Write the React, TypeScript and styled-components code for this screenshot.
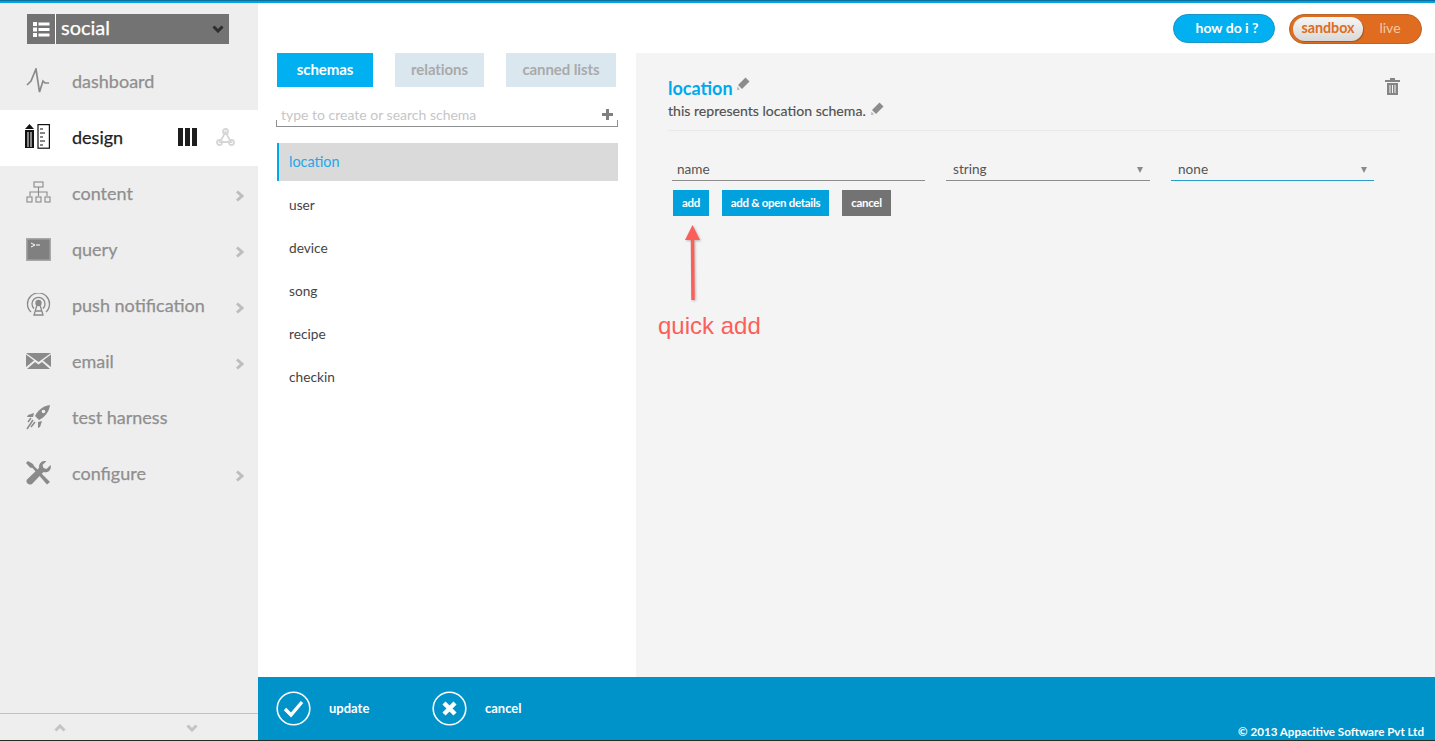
import React from 'react';
import styled, { createGlobalStyle } from 'styled-components';

const GlobalStyle = createGlobalStyle`
  html, body { margin: 0; padding: 0; height: 100%; background: #fff; }
  body { font-family: Lato, "Open Sans", sans-serif; }
  * { box-sizing: border-box; }
`;

const Page = styled.div`
  position: relative;
  width: 1435px;
  height: 741px;
  overflow: hidden;
  display: flex;
  flex-direction: column;
  border-bottom: 1px solid #2b2b20;
`;
const TopLine = styled.div`
  height: 3px;
  flex-shrink: 0;
  background: #00a2e0;
  border-top: 1px solid #0a6f9c;
`;
const Body = styled.div`
  flex: 1;
  display: flex;
  min-height: 0;
`;

/* sidebar */
const Sidebar = styled.aside`
  width: 258px;
  flex-shrink: 0;
  background: #eeeeee;
  display: flex;
  flex-direction: column;
`;
const AppSelect = styled.div`
  display: flex;
  gap: 1px;
  height: 30px;
  margin: 11px 29px 10px 27px;
  background: #fff;
`;
const AppIcon = styled.div`
  width: 28px;
  background: #737373;
  display: flex;
  align-items: center;
  justify-content: center;
`;
const AppName = styled.div`
  flex: 1;
  background: #737373;
  color: #fff;
  font-size: 20px;
  line-height: 28px;
  padding: 0 5px 0 5px;
  display: flex;
  justify-content: space-between;
  align-items: center;
  -webkit-text-stroke: 0.25px #fff;
`;
const AppNameText = styled.span`
  margin-top: -4px;
`;
const Nav = styled.nav`
  flex: 1;
`;
const NavRow = styled.div<{ $active?: boolean }>`
  height: 56px;
  display: flex;
  align-items: center;
  padding: 0 0 2px 25px;
  background: ${(p) => (p.$active ? '#fff' : 'transparent')};
  color: ${(p) => (p.$active ? '#1e1e1e' : '#8f8f8f')};
  font-size: 18px;
`;
const NavIcon = styled.span`
  width: 26px;
  height: 26px;
  margin-right: 21px;
  display: flex;
  align-items: center;
  justify-content: center;
  flex-shrink: 0;
`;
const NavLabel = styled.span`
  flex: 1;
  -webkit-text-stroke: 0.25px currentColor;
`;
const NavChevron = styled.span`
  width: 8px;
  height: 12px;
  margin-right: 14px;
  margin-top: 5px;
  display: flex;
`;
const DesignTools = styled.span`
  display: flex;
  align-items: center;
  gap: 19px;
  margin-right: 23px;
`;
const SideFooter = styled.div`
  height: 27px;
  border-top: 1px solid #c2c2c2;
  display: flex;
  align-items: center;
  justify-content: space-between;
  padding: 1px 60px 0 54px;
`;

/* main */
const Main = styled.main`
  flex: 1;
  min-width: 0;
  display: flex;
  flex-direction: column;
`;
const Header = styled.header`
  height: 50px;
  flex-shrink: 0;
  display: flex;
  justify-content: flex-end;
  align-items: flex-start;
  padding: 11px 13px 0 0;
  gap: 14px;
`;
const HelpButton = styled.div`
  width: 102px;
  height: 29px;
  border-radius: 15px;
  background: #00b0f0;
  border: 1px solid #1c94c4;
  color: #fff;
  font-size: 14px;
  font-weight: 700;
  display: flex;
  align-items: center;
  justify-content: center;
  padding: 0 0 2px 6px;
`;
const EnvSwitch = styled.div`
  width: 133px;
  height: 30px;
  border-radius: 15px;
  background: #e06c20;
  border: 1px solid #b8662a;
  display: flex;
  align-items: center;
  padding-left: 3px;
`;
const EnvActive = styled.div`
  width: 70px;
  height: 24px;
  border-radius: 12px;
  background: linear-gradient(#f6f6f6, #d8d8d8);
  box-shadow: 1px 1px 1px #9a5a2a;
  color: #e06c20;
  font-size: 14.3px;
  font-weight: 700;
  text-align: center;
  line-height: 21px;
`;
const EnvOther = styled.div`
  flex: 1;
  text-align: center;
  color: #f3c9a8;
  font-size: 14px;
  padding-right: 4px;
  margin-top: -3px;
`;
const Content = styled.div`
  flex: 1;
  display: flex;
  min-height: 0;
`;

/* schema list column */
const ListColumn = styled.section`
  width: 378px;
  flex-shrink: 0;
  padding: 0 18px 0 19px;
`;
const Tabs = styled.div`
  display: flex;
  gap: 22px;
  width: 339px;
`;
const Tab = styled.div<{ $active?: boolean; $w: number }>`
  width: ${(p) => p.$w}px;
  height: 34px;
  background: ${(p) => (p.$active ? '#00b0f0' : '#dae7ef')};
  color: ${(p) => (p.$active ? '#fff' : '#aaaaaa')};
  font-size: 15px;
  font-weight: 700;
  letter-spacing: -0.1px;
  padding-bottom: 2px;
  display: flex;
  align-items: center;
  justify-content: center;
`;
const SearchBox = styled.div`
  margin: 19px 0 16px -1px;
  width: 342px;
  height: 21px;
  border: 1px solid #8f8f8f;
  border-width: 0 1px 1px;
  border-image: linear-gradient(to bottom, transparent 70%, #8f8f8f 70%) 1;
  display: flex;
  align-items: center;
  justify-content: space-between;
  padding: 0 4px 4px 4px;
  color: #c6c6c6;
  font-size: 14px;
`;
const SchemaList = styled.div`
  display: flex;
  flex-direction: column;
  gap: 5px;
`;
const SchemaRow = styled.div<{ $active?: boolean }>`
  height: 38px;
  display: flex;
  align-items: center;
  padding: 0 0 2px ${(p) => (p.$active ? '10px' : '12px')};
  font-size: ${(p) => (p.$active ? '14.4px' : '13.7px')};
  color: ${(p) => (p.$active ? '#22a7ea' : '#444')};
  background: ${(p) => (p.$active ? '#dadada' : 'transparent')};
  border-left: ${(p) => (p.$active ? '2px solid #00a9ec' : 'none')};
`;

/* detail panel */
const Detail = styled.section`
  flex: 1;
  background: #f4f4f4;
  padding: 24px 35px 0 32px;
`;
const DetailHead = styled.div`
  display: flex;
  justify-content: space-between;
  align-items: flex-start;
  height: 54px;
  border-bottom: 1px solid #e9e9e9;
`;
const Title = styled.h1`
  margin: 0;
  color: #00a9ec;
  font-size: 18px;
  font-weight: 700;
  line-height: 22px;
  display: flex;
  align-items: flex-start;
  gap: 4px;
`;
const Description = styled.p`
  margin: 3px 0 0;
  color: #505050;
  font-size: 14.1px;
  line-height: 18px;
  display: flex;
  align-items: flex-start;
  gap: 5px;
  -webkit-text-stroke: 0.15px currentColor;
`;
const TrashIcon = styled.span`
  padding-top: 1px;
  display: flex;
`;
const FieldRow = styled.div`
  display: flex;
  gap: 21px;
  margin: 29px 0 0 4px;
`;
const Field = styled.div<{ $w: number; $blue?: boolean; $inset?: boolean }>`
  width: ${(p) => p.$w}px;
  height: 21px;
  border-bottom: 1px solid ${(p) => (p.$blue ? '#2a9ccc' : '#8c8c8c')};
  color: #555;
  font-size: 13.6px;
  padding: 0 7px 2px ${(p) => (p.$inset ? '7px' : '5px')};
  display: flex;
  justify-content: space-between;
  align-items: center;
`;
const Caret = styled.span`
  width: 0;
  height: 0;
  margin-top: 1px;
  border-left: 3.5px solid transparent;
  border-right: 3.5px solid transparent;
  border-top: 6px solid #8a8a8a;
`;
const ButtonRow = styled.div`
  display: flex;
  gap: 13px;
  margin: 9px 0 0 5px;
`;
const SmallButton = styled.div<{ $grey?: boolean; $w: number }>`
  width: ${(p) => p.$w}px;
  height: 26px;
  background: ${(p) => (p.$grey ? '#737373' : '#00a1dc')};
  color: #fff;
  font-size: 11.5px;
  font-weight: 700;
  letter-spacing: -0.3px;
  padding-bottom: 1px;
  display: flex;
  align-items: center;
  justify-content: center;
`;

/* annotation over the panel */
const Annotation = styled.div`
  position: absolute;
  left: 658px;
  top: 225px;
`;
const ArrowDrawing = styled.svg`
  position: absolute;
  left: 20px;
  top: 0;
  filter: drop-shadow(1px 1px 1px rgba(0, 0, 0, 0.25));
`;
const AnnotationText = styled.div`
  position: absolute;
  top: 87px;
  left: 0;
  white-space: nowrap;
  color: #fb5f5a;
  font-family: "Liberation Sans", Arial, sans-serif;
  font-size: 24px;
  line-height: 28px;
`;

/* footer */
const Footer = styled.footer`
  position: relative;
  height: 63px;
  flex-shrink: 0;
  background: #0093c9;
  display: flex;
  align-items: center;
  padding: 0 0 0 18px;
  color: #fff;
  font-size: 13px;
  font-weight: 700;
`;
const FooterAction = styled.div<{ $w: number }>`
  width: ${(p) => p.$w}px;
  display: flex;
  align-items: center;
  gap: 18px;
  margin-bottom: 1px;
`;
const Copyright = styled.div`
  position: absolute;
  right: 11px;
  bottom: 1px;
  font-size: 11.6px;
  line-height: 15px;
`;

const grey = '#8a8a8a';

const Chevron = () => (
  <NavChevron>
    <svg width="8" height="12" viewBox="0 0 8 12">
      <path d="M1 1.5 L6 6 L1 10.5" fill="none" stroke="#bdbdbd" strokeWidth="3" />
    </svg>
  </NavChevron>
);

const Pencil = () => (
  <svg width="13" height="13" viewBox="0 0 13 13">
    <path d="M8.5 0.5 L12.5 4.5 L5 12 L1 8 Z" fill="#8c8c8c" />
    <path d="M0.5 9.5 L3 12.5 L0 13 Z" fill="#b5b5b5" />
  </svg>
);

const DashboardIcon = () => (
  <svg width="24" height="26" viewBox="0 0 24 26">
    <path d="M1 17 L5 13 L10 1 L13.5 24 L17 13 L19 15 L23 15" fill="none" stroke={grey} strokeWidth="1.7" />
  </svg>
);
const DesignIcon = () => (
  <svg width="26" height="26" viewBox="0 0 26 26">
    <path d="M4.5 0 L9 5 L0 5 Z" fill="#111" />
    <path d="M0 6 H9 V24 H0 Z M2.5 8 V23 H3.5 V8 Z M5.5 8 V23 H6.5 V8 Z" fill="#111" fillRule="evenodd" />
    <rect x="13" y="0.6" width="11.4" height="23.6" fill="#fff" stroke="#111" strokeWidth="1.2" />
    <path d="M15 5 H18 M15 9 H20 M15 13 H18 M15 17 H20 M15 21 H18" stroke="#111" strokeWidth="1" />
  </svg>
);
const ContentIcon = () => (
  <svg width="25" height="24" viewBox="0 0 25 24" fill="none" stroke={grey} strokeWidth="1.1">
    <rect x="8" y="1" width="9" height="5" />
    <path d="M12.5 6 V11 M4 15 V11 H21 V15 M12.5 11 V15" />
    <rect x="1" y="16" width="5" height="5" />
    <rect x="10" y="16" width="5" height="5" />
    <rect x="19" y="16" width="5" height="5" />
  </svg>
);
const QueryIcon = () => (
  <svg width="25" height="23" viewBox="0 0 25 23">
    <rect x="0.75" y="0.75" width="23.5" height="21.5" fill="#808080" stroke="#a8a8a8" strokeWidth="1.5" />
    <path d="M5 5 L9 7 L5 9 M10 7 H14" fill="none" stroke="#fff" strokeWidth="1" />
  </svg>
);
const PushIcon = () => (
  <svg width="25" height="24" viewBox="0 0 25 24" fill="none" stroke={grey} strokeWidth="1.3">
    <path d="M5 19 A11 11 0 1 1 20 19" />
    <path d="M8 15.5 A6.5 6.5 0 1 1 17 15.5" />
    <circle cx="12.5" cy="10" r="2.5" fill={grey} />
    <path d="M11 12 L8 22 H17 L14 12 M9.5 18 H15.5" />
  </svg>
);
const EmailIcon = () => (
  <svg width="25" height="16" viewBox="0 0 25 16">
    <path d="M0 0 H25 L12.5 9 Z" fill={grey} />
    <path d="M0 1.5 L8 7.5 L0 14 Z M25 1.5 L17 7.5 L25 14 Z" fill={grey} />
    <path d="M1 16 L9 9 L12.5 11.5 L16 9 L24 16 Z" fill={grey} />
  </svg>
);
const RocketIcon = () => (
  <svg width="25" height="25" viewBox="0 0 25 25">
    <path d="M24 0 C17 1 12 5 9 11 L13 15 C19 12 23 7 24 0 Z" fill={grey} />
    <circle cx="17.5" cy="6.5" r="1.8" fill="#eee" />
    <path d="M8 8 L2 10 L1 12 L7 12 Z M16 16 L14 22 L12 23 L12 17 Z" fill={grey} />
    <path d="M7 15 L1 24 M9 17 L5 22 M5 13 L2 17" stroke={grey} strokeWidth="1.5" />
  </svg>
);
const ConfigureIcon = () => (
  <svg width="25" height="25" viewBox="0 0 25 25" fill={grey}>
    <path d="M2 0 L0 2 L4 6.5 L6.5 7 L21 23.5 L24 21 L8 5 L7 3 Z" />
    <path d="M24.5 4 L20.5 8 L17.5 7 L16.5 4 L20.5 0 C15.5 -1 12.5 3 13 7 L1 18.5 C-1 21.5 3 25 6 23 L17.5 11 C21.5 12.5 26 9 24.5 4 Z" />
  </svg>
);

const navItems = [
  { label: 'content', icon: <ContentIcon /> },
  { label: 'query', icon: <QueryIcon /> },
  { label: 'push notification', icon: <PushIcon /> },
  { label: 'email', icon: <EmailIcon /> },
  { label: 'test harness', icon: <RocketIcon />, leaf: true },
  { label: 'configure', icon: <ConfigureIcon /> },
];

const schemas = ['user', 'device', 'song', 'recipe', 'checkin'];

export default function App() {
  return (
    <Page>
      <GlobalStyle />
      <TopLine />
      <Body>
        <Sidebar>
          <AppSelect>
            <AppIcon>
              <svg width="17" height="15" viewBox="0 0 17 15" fill="#fff">
                <rect x="0" y="0" width="4" height="4" />
                <rect x="5.5" y="0.5" width="11" height="3" />
                <rect x="0" y="5.5" width="4" height="4" />
                <rect x="5.5" y="6" width="11" height="3" />
                <rect x="0" y="11" width="4" height="4" />
                <rect x="5.5" y="11.5" width="11" height="3" />
              </svg>
            </AppIcon>
            <AppName>
              <AppNameText>social</AppNameText>
              <svg width="12" height="8" viewBox="0 0 12 8">
                <path d="M1.5 1.5 L6 6 L10.5 1.5" fill="none" stroke="#2e2e2e" strokeWidth="3" />
              </svg>
            </AppName>
          </AppSelect>
          <Nav>
            <NavRow>
              <NavIcon><DashboardIcon /></NavIcon>
              <NavLabel>dashboard</NavLabel>
            </NavRow>
            <NavRow $active>
              <NavIcon><DesignIcon /></NavIcon>
              <NavLabel>design</NavLabel>
              <DesignTools>
                <svg width="19" height="18" viewBox="0 0 19 18" fill="#1e1e1e">
                  <rect x="0" y="0" width="5" height="18" />
                  <rect x="7" y="0" width="5" height="18" />
                  <rect x="14" y="0" width="5" height="18" />
                </svg>
                <svg width="19" height="18" viewBox="0 0 19 18" fill="none" stroke="#d6d6d6" strokeWidth="1.8">
                  <path d="M9.5 4 L4 14 H15 Z" />
                  <circle cx="9.5" cy="3.5" r="2.5" />
                  <circle cx="3.5" cy="14.5" r="2.5" />
                  <circle cx="15.5" cy="14.5" r="2.5" />
                </svg>
              </DesignTools>
            </NavRow>
            {navItems.map((item) => (
              <NavRow key={item.label}>
                <NavIcon>{item.icon}</NavIcon>
                <NavLabel>{item.label}</NavLabel>
                {!item.leaf && <Chevron />}
              </NavRow>
            ))}
          </Nav>
          <SideFooter>
            <svg width="12" height="8" viewBox="0 0 12 8">
              <path d="M1.5 6.5 L6 2 L10.5 6.5" fill="none" stroke="#c4c4c4" strokeWidth="3" />
            </svg>
            <svg width="12" height="8" viewBox="0 0 12 8">
              <path d="M1.5 1.5 L6 6 L10.5 1.5" fill="none" stroke="#c4c4c4" strokeWidth="3" />
            </svg>
          </SideFooter>
        </Sidebar>
        <Main>
          <Header>
            <HelpButton>how do i ?</HelpButton>
            <EnvSwitch>
              <EnvActive>sandbox</EnvActive>
              <EnvOther>live</EnvOther>
            </EnvSwitch>
          </Header>
          <Content>
            <ListColumn>
              <Tabs>
                <Tab $active $w={96}>schemas</Tab>
                <Tab $w={89}>relations</Tab>
                <Tab $w={110}>canned lists</Tab>
              </Tabs>
              <SearchBox>
                type to create or search schema
                <svg width="11" height="11" viewBox="0 0 11 11" fill="#808080">
                  <rect x="4" y="0" width="3" height="11" />
                  <rect x="0" y="4" width="11" height="3" />
                </svg>
              </SearchBox>
              <SchemaList>
                <SchemaRow $active>location</SchemaRow>
                {schemas.map((s) => (
                  <SchemaRow key={s}>{s}</SchemaRow>
                ))}
              </SchemaList>
            </ListColumn>
            <Detail>
              <DetailHead>
                <div>
                  <Title>location <Pencil /></Title>
                  <Description>this represents location schema. <Pencil /></Description>
                </div>
                <TrashIcon>
                  <svg width="15" height="17" viewBox="0 0 15 17" fill="#858585">
                    <path d="M5 0 H10 V2 H15 V4 H0 V2 H5 Z" />
                    <path d="M2 5 H13 V17 H2 Z M4.5 7 V15 H5.5 V7 Z M7 7 V15 H8 V7 Z M9.5 7 V15 H10.5 V7 Z" fillRule="evenodd" />
                  </svg>
                </TrashIcon>
              </DetailHead>
              <FieldRow>
                <Field $w={253}>name</Field>
                <Field $w={204} $inset>string<Caret /></Field>
                <Field $w={203} $inset $blue>none<Caret /></Field>
              </FieldRow>
              <ButtonRow>
                <SmallButton $w={36}>add</SmallButton>
                <SmallButton $w={107}>add &amp; open details</SmallButton>
                <SmallButton $w={49} $grey>cancel</SmallButton>
              </ButtonRow>
            </Detail>
          </Content>
          <Footer>
            <FooterAction $w={156}>
              <svg width="35" height="35" viewBox="0 0 35 35" fill="none" stroke="#fff">
                <circle cx="17.5" cy="17.5" r="16.3" strokeWidth="1.6" />
                <path d="M9 18 L15 24 L26 11" strokeWidth="3.4" />
              </svg>
              update
            </FooterAction>
            <FooterAction $w={120}>
              <svg width="35" height="35" viewBox="0 0 35 35" fill="none" stroke="#fff">
                <circle cx="17.5" cy="17.5" r="16.3" strokeWidth="1.6" />
                <path d="M12 12 L23 23 M23 12 L12 23" strokeWidth="4.4" />
              </svg>
              cancel
            </FooterAction>
            <Copyright>© 2013 Appacitive Software Pvt Ltd</Copyright>
          </Footer>
        </Main>
      </Body>
      <Annotation>
        <ArrowDrawing width="30" height="80" viewBox="0 0 30 80">
          <path d="M14.5 14 L15 75" stroke="#fb5f5a" strokeWidth="3.5" />
          <path d="M14.5 0 L22 15 H7 Z" fill="#fb5f5a" />
        </ArrowDrawing>
        <AnnotationText>quick add</AnnotationText>
      </Annotation>
    </Page>
  );
}
